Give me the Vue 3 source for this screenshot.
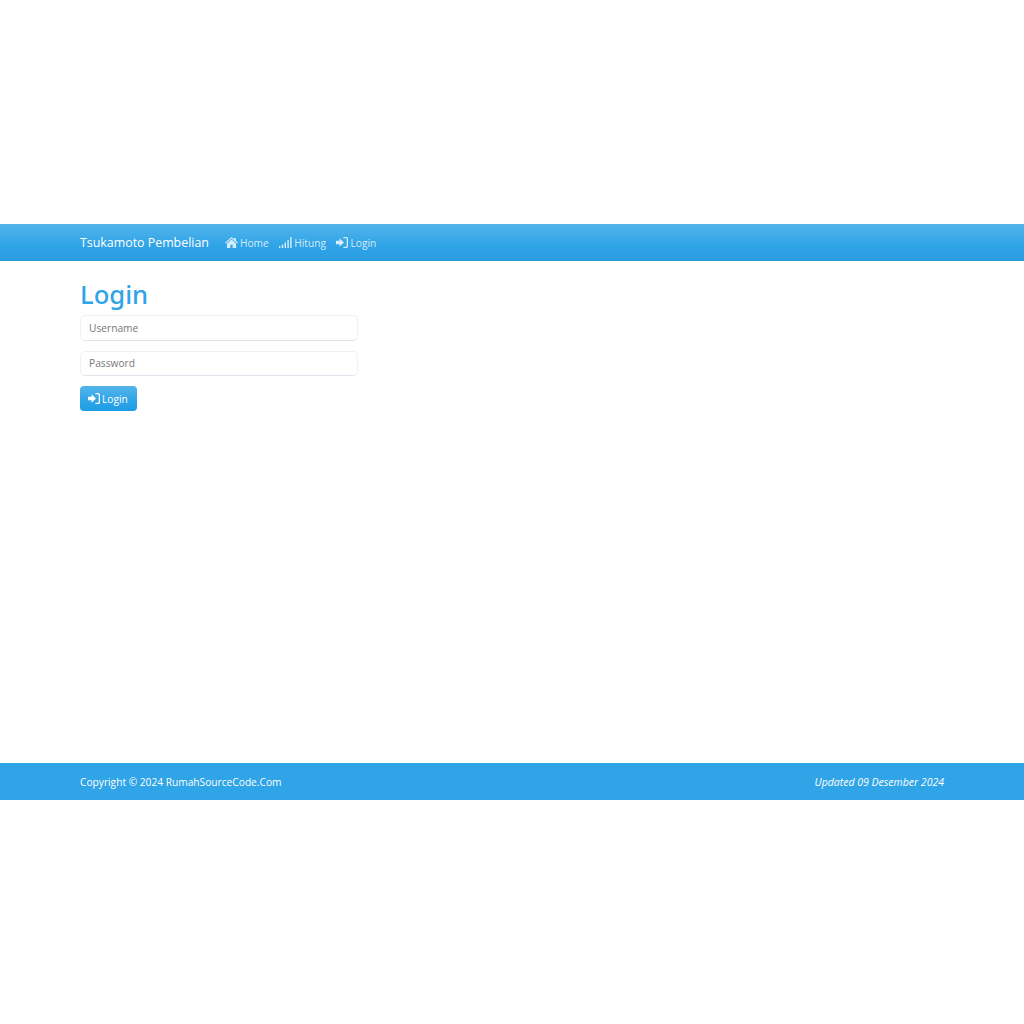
<template>
  <div class="page">
    <nav class="navbar">
      <div class="container nav-inner">
        <a class="brand">Tsukamoto Pembelian</a>
        <ul class="nav-links">
          <li>
            <svg class="icon" width="13" height="11" viewBox="0 0 13 11"><path d="M6.5 0 L9.2 2.3 V1 H10.9 V3.8 L13 5.7 L12.3 6.5 L6.5 1.5 L0.7 6.5 L0 5.7 Z M1.9 6.4 L6.5 2.4 L11.1 6.4 V11 H7.6 V7.8 H5.4 V11 H1.9 Z" fill="currentColor"/></svg>
            Home
          </li>
          <li>
            <svg class="icon" width="13" height="11" viewBox="0 0 13 11"><path d="M0 9h1.4v2H0z M2.8 7.5h1.4V11H2.8z M5.6 5.5H7V11H5.6z M8.4 3h1.4v8H8.4z M11.2 0h1.4v11h-1.4z" fill="currentColor"/></svg>
            Hitung
          </li>
          <li>
            <svg class="icon" width="12" height="11" viewBox="0 0 12 11"><path d="M0 3.8H3.6V1.3L8 5.5L3.6 9.7V7.2H0Z M7.4 0H10.2C11.2 0 12 .8 12 1.8V9.2C12 10.2 11.2 11 10.2 11H7.4V9.7H10C10.4 9.7 10.7 9.4 10.7 9V2C10.7 1.6 10.4 1.3 10 1.3H7.4Z" fill="currentColor"/></svg>
            Login
          </li>
        </ul>
      </div>
    </nav>

    <main class="container content">
      <h1>Login</h1>
      <form class="login-form" @submit.prevent>
        <input type="text" placeholder="Username" />
        <input type="password" placeholder="Password" />
        <button type="submit" class="btn-login">
          <svg class="icon" width="12" height="11" viewBox="0 0 12 11"><path d="M0 3.8H3.6V1.3L8 5.5L3.6 9.7V7.2H0Z M7.4 0H10.2C11.2 0 12 .8 12 1.8V9.2C12 10.2 11.2 11 10.2 11H7.4V9.7H10C10.4 9.7 10.7 9.4 10.7 9V2C10.7 1.6 10.4 1.3 10 1.3H7.4Z" fill="currentColor"/></svg>
          Login
        </button>
      </form>
    </main>

    <footer class="footer">
      <div class="container footer-inner">
        <span class="copyright">Copyright © 2024 RumahSourceCode.Com</span>
        <em>Updated 09 Desember 2024</em>
      </div>
    </footer>
  </div>
</template>

<script setup>
</script>

<style>
body {
  background: #fff;
}
</style>

<style scoped>
.page {
  padding-top: 224px;
  font-family: "Open Sans", "Noto Sans", sans-serif;
  font-size: 10.2px;
}

.container {
  width: 864px;
  margin: 0 auto;
}

.navbar {
  height: 37px;
  background: linear-gradient(#54b4eb, #2fa4e7 60%, #2a9ee0);
  border-bottom: 1px solid #2a9de0;
  box-sizing: border-box;
}

.nav-inner {
  display: flex;
  align-items: center;
  height: 100%;
  padding-top: 1px;
  box-sizing: border-box;
}

.brand {
  color: #fff;
  font-size: 12.4px;
  margin-right: 16px;
}

.nav-links {
  display: flex;
  gap: 10.5px;
  list-style: none;
  margin: 0;
  padding: 0;
  color: rgba(255, 255, 255, 0.8);
}

.nav-links li {
  display: flex;
  align-items: center;
  gap: 2px;
}

.icon {
  display: block;
}

.content {
  height: 502px;
  padding-top: 13px;
  box-sizing: border-box;
}

h1 {
  margin: 0;
  color: #2fa4e7;
  font-family: "Noto Sans", "Open Sans", sans-serif;
  font-size: 25.6px;
  font-weight: 500;
  line-height: 41px;
}

.login-form {
  display: flex;
  flex-direction: column;
  align-items: flex-start;
  gap: 10px;
}

input {
  width: 278px;
  height: 25.5px;
  padding: 0 8px;
  box-sizing: border-box;
  border: 1px solid #f1f1f5;
  border-bottom-color: #e3e3ee;
  border-radius: 5px;
  font-family: inherit;
  font-size: 10.2px;
  color: #555;
  outline: none;
}

input::placeholder {
  color: #777;
}

.btn-login {
  display: flex;
  align-items: center;
  gap: 2px;
  height: 25px;
  width: 57px;
  padding: 0 8px;
  border: none;
  border-radius: 4px;
  background: linear-gradient(#54b4eb, #2fa4e7 60%, #1d9ce5);
  color: #fff;
  font-family: inherit;
  font-size: 10.2px;
}

.footer {
  height: 37px;
  background: #2fa4e7;
  color: #fff;
  font-size: 10.5px;
}

.copyright {
  font-size: 10.2px;
}

.footer-inner {
  display: flex;
  align-items: center;
  justify-content: space-between;
  height: 100%;
}
</style>
